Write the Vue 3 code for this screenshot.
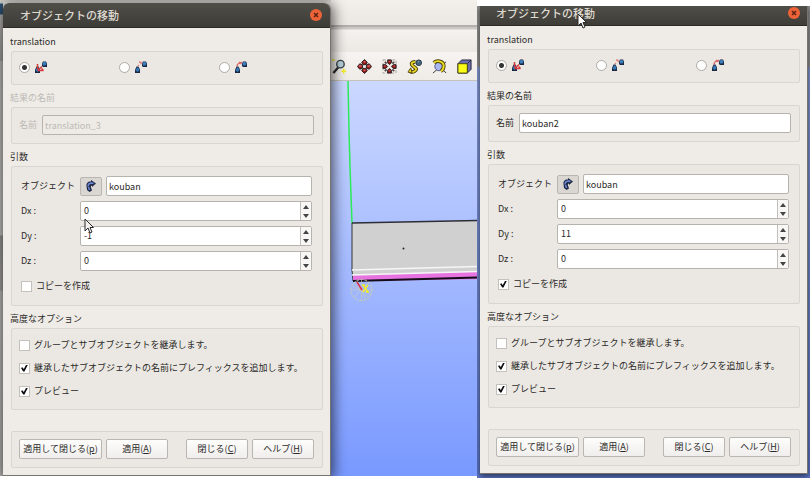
<script setup>
import { reactive } from 'vue'

const dialogs = reactive([
  { id: 'a', mode: 0, nameLocked: true, name: 'translation_3', object: 'kouban', dx: 0, dy: -1, dz: 0, copy: false, inherit: false, prefix: true, preview: true },
  { id: 'b', mode: 0, nameLocked: false, name: 'kouban2', object: 'kouban', dx: 0, dy: 11, dz: 0, copy: true, inherit: false, prefix: true, preview: true }
])

const modes = ['dx dy dz', '2 points', 'vector']
const axes = [
  { key: 'dx', label: 'Dx :' },
  { key: 'dy', label: 'Dy :' },
  { key: 'dz', label: 'Dz :' }
]
const options = [
  { key: 'inherit', label: 'グループとサブオブジェクトを継承します。' },
  { key: 'prefix', label: '継承したサブオブジェクトの名前にプレフィックスを追加します。' },
  { key: 'preview', label: 'プレビュー' }
]
const actions = [
  { text: '適用して閉じる', key: 'p', cls: 'wide' },
  { text: '適用', key: 'A', cls: '' },
  { text: '閉じる', key: 'C', cls: 'apart' },
  { text: 'ヘルプ', key: 'H', cls: '' }
]
</script>

<template>
  <main class="page">
    <section v-for="d in dialogs" :key="d.id" class="capture" :class="d.id">
      <div class="edge"></div>
      <form class="dialog" @submit.prevent>
        <header class="titlebar">
          <h1>オブジェクトの移動</h1>
          <button type="button" class="close" aria-label="close">
            <svg viewBox="0 0 12 12"><path d="M4 4l4 4M8 4l-4 4" stroke="#5a2413" stroke-width="1.5" /></svg>
          </button>
        </header>

        <div class="body">
          <section class="group">
            <h2>translation</h2>
            <div class="frame modes">
              <label v-for="(m, i) in modes" :key="m">
                <input v-model="d.mode" type="radio" :name="'mode-' + d.id" :value="i" :aria-label="m" />
                <svg class="mode-icon" viewBox="0 0 12 12">
                  <path d="M0 9l1.500-3.500h2L5 8.500V12H0z" fill="#1a2740" />
                  <path d="M.5 9.500L2 6.500h1.500l1 3-2 1.500z" fill="#3576b5" />
                  <path d="M7 2.500L8 .5h3l1 2V6H8L7 5z" fill="#1a2740" />
                  <path d="M7.500 2.500L8.500 1h2l1 2-1 1.500H8z" fill="#3b7dbc" />
                  <path v-if="i === 0" d="M2.500 8V3M2.500 9.500L7 5.500M3 9.500h5.500M6.500 7.500l2 2" stroke="#d8393c" stroke-width="1.500" fill="none" />
                  <path v-else-if="i === 1" d="M3 5l1-1M5.500 3L7 2M4 1l2.500.5" stroke="#e07f7c" stroke-width="1.500" fill="none" />
                  <path v-else d="M2 5.500C2 3.500 4 1.500 7 1.500M4 1l2.500 2" stroke="#da6a67" stroke-width="1.500" fill="none" />
                </svg>
              </label>
            </div>
          </section>

          <section class="group" :class="{ locked: d.nameLocked }">
            <h2>結果の名前</h2>
            <div class="frame name">
              <label :for="'name-' + d.id">名前</label>
              <input :id="'name-' + d.id" v-model="d.name" class="field" type="text" :disabled="d.nameLocked" />
            </div>
          </section>

          <section class="group">
            <h2>引数</h2>
            <div class="frame args">
              <div class="row">
                <label :for="'object-' + d.id">オブジェクト</label>
                <button type="button" class="pick" aria-label="select">
                  <svg viewBox="0 0 12 12">
                    <path d="M1.500 6C1 3 3.500 1 6 1.500V0l5 3.500-4 3.500V5.500C6 5.500 5.500 6.500 6 7.500l1 3L4.500 12 2 10z" fill="#1f2945" />
                    <path d="M3 6.500c0-2.500 1.500-3.500 4-3.500l1.500.5M3.500 7l1 3" stroke="#6e8ad6" stroke-width="1.500" fill="none" />
                  </svg>
                </button>
                <input :id="'object-' + d.id" v-model="d.object" class="field" type="text" />
              </div>
              <div v-for="a in axes" :key="a.key" class="row">
                <label :for="a.key + d.id">{{ a.label }}</label>
                <div class="spin">
                  <input :id="a.key + d.id" v-model.number="d[a.key]" type="number" />
                  <div class="steps">
                    <button type="button" aria-label="+" @click="d[a.key]++"><i class="up"></i></button>
                    <button type="button" aria-label="-" @click="d[a.key]--"><i class="down"></i></button>
                  </div>
                </div>
              </div>
              <label class="check">
                <input v-model="d.copy" type="checkbox" /><span>コピーを作成</span>
              </label>
            </div>
          </section>

          <section class="group">
            <h2>高度なオプション</h2>
            <div class="frame options">
              <label v-for="o in options" :key="o.key" class="check">
                <input v-model="d[o.key]" type="checkbox" /><span>{{ o.label }}</span>
              </label>
            </div>
          </section>

          <div class="frame actions">
            <button v-for="b in actions" :key="b.key" type="button" :class="b.cls">{{ b.text }}(<u>{{ b.key }}</u>)</button>
          </div>
        </div>
      </form>

      <div v-if="d.id === 'a'" class="app">
        <div class="menu"></div>
        <div class="bar"></div>
        <div class="toolbar">
          <button type="button" aria-label="zoom">
            <svg viewBox="0 0 16 16">
              <path d="M6.500 9l-5 6" stroke="#2c2c2c" stroke-width="2.500" />
              <circle cx="9" cy="5.500" r="4" fill="#b9d3dc" stroke="#3b4548" stroke-width="1.500" />
              <path d="M0 1h3M10 13h5M12.500 10.500v5" stroke="#f5ee21" stroke-width="1.500" />
            </svg>
          </button>
          <button type="button" aria-label="pan">
            <svg viewBox="0 0 16 16">
              <path d="M8 3.500L12.500 8 8 12.500 3.500 8z" fill="#f4f1ee" stroke="#a39f9b" stroke-width="2" />
              <g fill="#8f1b1d" stroke="#26201f"><path d="M8 .5l3 3L9.500 6h-3L5 3.500zM8 15.500l3-3L9.500 10h-3L5 12.500zM.5 8L3 5l3 1.500v3L3 11zM15.500 8L13 5l-3 1.500v3l3 1.500z" /></g>
              <path d="M7 3h2M2 7.500h3M11 7.500h3M7 12h2" stroke="#e2605d" stroke-width="1.500" />
            </svg>
          </button>
          <button type="button" aria-label="global pan">
            <svg viewBox="0 0 16 16">
              <path d="M1 1h14v14H1z" fill="#f0edea" stroke="#a5a09c" stroke-dasharray="3 2" />
              <path d="M3 3l2 2M13 3l-2 2M3 13l2-2M13 13l-2-2" stroke="#4f4b49" stroke-width="2" />
              <g fill="#8a191b" stroke="#26201f"><path d="M6 1h4v3L8 6 6 4zM6 15h4v-3l-2-2-2 2zM1 6v4h3l2-2-2-2zM15 6v4h-3l-2-2 2-2z" /></g>
              <path d="M7 2.500h2M2 7.500h2M12 7.500h2M7 12.500h2" stroke="#e05a57" />
            </svg>
          </button>
          <button type="button" aria-label="rotation point">
            <svg viewBox="0 0 16 16">
              <path d="M9 3C4 3 4 6 7 8s4 3 1 5-4 0-5 0" fill="none" stroke="#4b430e" stroke-width="4" />
              <path d="M9 3C4 3 4 6 7 8s4 3 1 5-4 0-5 0" fill="none" stroke="#e9d625" stroke-width="2" />
              <path d="M4 9.500L1 14l4.500 1z" fill="#e9d625" stroke="#51490f" />
              <circle cx="12.500" cy="4" r="3" fill="#426782" stroke="#28333d" />
              <path d="M11.500 3h1.500" stroke="#91b2ca" />
            </svg>
          </button>
          <button type="button" aria-label="rotate">
            <svg viewBox="0 0 16 16">
              <path d="M1 15L15 3M3 2l12 13" stroke="#33332e" />
              <circle cx="7.500" cy="8" r="4.500" fill="#aab6ee" stroke="#4b5480" />
              <path d="M2 4C5 1 12 2 12.500 7c0 3-1 5-3 6" fill="none" stroke="#4d4208" stroke-width="4" />
              <path d="M2 4C5 1 12 2 12.500 7c0 3-1 5-3 6" fill="none" stroke="#eee029" stroke-width="2" />
            </svg>
          </button>
          <button type="button" aria-label="front view">
            <svg viewBox="0 0 16 16">
              <path d="M1 5l4-4h10v10l-4 4H1z" fill="#6c6eb0" stroke="#23243a" />
              <path d="M11 5l4-4M11 5v10" stroke="#23243a" />
              <path d="M1 5h10v10H1z" fill="#fbfb18" stroke="#46450c" />
            </svg>
          </button>
        </div>
        <svg class="view" viewBox="331 81 146 395" preserveAspectRatio="xMinYMin slice">
          <path d="M348 81l1 50 1 36 2 56" fill="none" stroke="#2cea58" stroke-width="1.500" />
          <path d="M352 223l145-3v54l-145 2z" fill="#d0d0d0" />
          <path d="M352 223l145-3" stroke="#2d2d35" stroke-width="1.500" />
          <path d="M352 223v47l1 11" stroke="#333" fill="none" />
          <path d="M353 275l144-4v8l-144 2z" fill="#e673df" />
          <path d="M352 270l145-4M352 275l145-4" stroke="#f6f6f6" stroke-width="1.500" />
          <path d="M353 281l144-4" stroke="#150c18" stroke-width="2" />
          <circle cx="403.500" cy="248.500" r="1" fill="#222" />
          <g stroke="#c9ccb6" fill="none">
            <circle cx="361.500" cy="290" r="10.500" stroke-dasharray="3 1" />
            <path d="M351 290h21M361.500 280v21M354 283l15 15M354 297l15-15M357 281l9 19M352 286l19 8" stroke-opacity=".6" />
          </g>
          <path d="M357 282l5 8" stroke="#e0304a" stroke-width="1.500" />
          <path d="M363 285l5 7M368 285l-5 7M362 285h3M366 292h3" stroke="#f1ed27" stroke-width="1.500" />
        </svg>
      </div>
      <div v-else class="edge"></div>

      <svg class="cursor" viewBox="0 0 10 16">
        <path d="M1 1v12l3-3 2 5 2-1-2-4.500h3.500z" :fill="d.id === 'a' ? '#f2f1ef' : '#fff'" stroke="#2a2a2a" />
      </svg>
    </section>
  </main>
</template>

<style>
body {
  margin: 0;
  background: #fff;
}
</style>

<style scoped>
* {
  box-sizing: border-box;
}
.page {
  display: grid;
  grid-template-columns: 477fr 333fr;
  font: 9px/14px "Noto Sans CJK JP", "Noto Sans", sans-serif;
  color: #2b2a28;
}
h1,
h2 {
  margin: 0;
  font-weight: 400;
}
button,
input {
  margin: 0;
  padding: 0;
  font: inherit;
  color: inherit;
}
svg {
  display: block;
}
.capture {
  position: relative;
  display: grid;
  overflow: hidden;
}
.capture.a {
  grid-template-columns: 3px 328fr 146fr;
  margin-bottom: 2px;
  background: linear-gradient(#d3d0cc, #efece8 3px);
}
.capture.b {
  grid-template-columns: 3px 328fr 2px;
  margin-top: 6px;
  padding-bottom: 4px;
  background: linear-gradient(#8f8d8b 60px, #8095d0 62px, #5a74c4);
}
.a .edge {
  background: linear-gradient(#d8d5d1 3px, #31577d 4px, #31577d 14px, #c8c5c2 15px, #b0aeac 60px, #cfcdcb 62px, #d5d3d1 235px, #a9a6a3 236px, #b5b2af 290px, #cfcdcb 292px, #c5c3c1);
}
.dialog {
  position: relative;
  z-index: 1;
  background: #efece7;
  border-right: 1px solid #77736e;
  border-bottom: 1px solid #77736e;
}
.a .dialog {
  margin-top: 3px;
  border-radius: 6px 6px 0 0;
  box-shadow: 0 2px 14px 2px rgba(0, 0, 0, 0.65);
}
.b .dialog {
  box-shadow: 0 2px 6px rgba(0, 0, 0, 0.6);
}
.titlebar {
  display: flex;
  align-items: center;
  justify-content: space-between;
  height: 25px;
  padding: 0 8px 0 17px;
  background: linear-gradient(#504e48, #3d3c37);
  border-bottom: 1px solid #2b2a27;
}
.a .titlebar {
  border-radius: 6px 6px 0 0;
}
.b .titlebar {
  height: 20px;
  padding: 0 7px 5px 16px;
}
.titlebar h1 {
  font-size: 11px;
  font-weight: 500;
  line-height: 16px;
  color: #dedad0;
}
.close {
  width: 12px;
  height: 12px;
  border: 0;
  border-radius: 50%;
  background: #ee6238;
}
.body {
  display: flex;
  flex-direction: column;
  gap: 6px;
  padding: 7px 7px 7px 8px;
}
.group h2 {
  height: 16px;
  margin-left: -1px;
  font-size: 9px;
  line-height: 14px;
}
.locked {
  color: #bcb9b5;
}
.frame {
  padding: 7px;
  border: 1px solid #d9d5d1;
  border-radius: 2px;
  background: #ebe8e3;
}
.modes {
  display: grid;
  grid-template-columns: repeat(3, 1fr);
  padding: 9px 3px 11px 7px;
}
.modes label {
  display: flex;
  align-items: center;
  gap: 5px;
}
input[type="radio"] {
  appearance: none;
  width: 11px;
  height: 11px;
  border: 1px solid #aeaaa6;
  border-radius: 50%;
  background: #fff;
}
input[type="radio"]:checked {
  background: radial-gradient(circle, #333 2px, #fff 3px);
}
.mode-icon {
  width: 12px;
  height: 12px;
}
.name {
  display: flex;
  align-items: center;
  gap: 5px;
  padding: 7px 8px 8px 7px;
}
.field,
.spin {
  flex: 1;
  min-width: 0;
  height: 20px;
  border: 1px solid #b7b3af;
  border-radius: 2px;
  background: #fff;
}
.field {
  padding: 0 2px;
}
.field:disabled {
  background: #eeebe6;
}
.args {
  display: flex;
  flex-direction: column;
  gap: 5px;
  padding: 9px 10px 12px 9px;
}
.row {
  display: flex;
  align-items: center;
}
.row label {
  flex: 0 0 59px;
}
.pick {
  display: grid;
  place-items: center;
  width: 22px;
  height: 19px;
  margin-right: 4px;
  border: 1px solid #b9b5b1;
  border-radius: 2px;
  background: #dad6d2;
}
.pick svg {
  width: 12px;
  height: 12px;
}
.spin {
  display: flex;
}
.spin input {
  flex: 1;
  min-width: 0;
  padding: 0 3px;
  border: 0;
  background: none;
  appearance: textfield;
}
.spin input::-webkit-inner-spin-button {
  display: none;
}
.steps {
  display: grid;
  width: 11px;
  border-left: 1px solid #c2bebb;
  background: #f8f7f5;
}
.steps button {
  display: grid;
  place-items: center;
  border: 0;
  background: none;
}
.up,
.down {
  border: 3px solid transparent;
  border-top-width: 0;
  border-bottom: 4px solid #444;
}
.down {
  border-top: 4px solid #444;
  border-bottom: 0;
}
.check {
  display: flex;
  align-items: center;
  gap: 4px;
  white-space: nowrap;
}
.args .check {
  margin-top: 3px;
}
input[type="checkbox"] {
  appearance: none;
  display: grid;
  place-items: center;
  flex: none;
  width: 11px;
  height: 11px;
  border: 1px solid #c4c0bc;
  background: #fff;
}
input[type="checkbox"]:checked::before {
  content: "";
  width: 7px;
  height: 7px;
  background: #111;
  clip-path: polygon(0 50%, 20% 40%, 40% 65%, 75% 0, 100% 0, 50% 100%, 30% 100%);
}
.options {
  display: flex;
  flex-direction: column;
  gap: 9px;
  padding: 9px 7px 11px;
}
.actions {
  display: grid;
  grid-template-columns: 83fr 62fr 76fr 62fr;
  gap: 4px;
  margin-top: 15px;
  padding: 7px 8px 8px 7px;
}
.actions button {
  height: 20px;
  border: 1px solid #bab6b2;
  border-radius: 2px;
  background: linear-gradient(#fdfdfc, #f0eeec);
  white-space: nowrap;
}
.actions .apart {
  margin-left: 14px;
}
.app {
  display: flex;
  flex-direction: column;
  min-width: 0;
}
.menu {
  height: 25px;
  background: linear-gradient(#f3f0ec, #ebe7e2);
}
.bar {
  height: 27px;
  border-top: 2px solid #b2afac;
  background: linear-gradient(#cbc8c5 2px, #f5f2ef 3px, #ece8e3);
}
.toolbar {
  display: flex;
  align-items: center;
  gap: 10px;
  height: 29px;
  padding-left: 1px;
  border-bottom: 1px solid #c8c3b9;
  background: linear-gradient(#f7f4f1, #efebe7);
}
.toolbar button {
  flex: none;
  width: 15px;
  height: 15px;
  border: 0;
  background: none;
}
.toolbar svg {
  width: 15px;
  height: 15px;
}
.view {
  flex: 1 1 0;
  width: 100%;
  min-height: 0;
  background: linear-gradient(#cbd8ff, #7999ff);
}
.cursor {
  position: absolute;
  z-index: 2;
  width: 10px;
  height: 16px;
}
.a .cursor {
  left: 84px;
  top: 218px;
}
.b .cursor {
  left: 100px;
  top: 7px;
}
</style>
